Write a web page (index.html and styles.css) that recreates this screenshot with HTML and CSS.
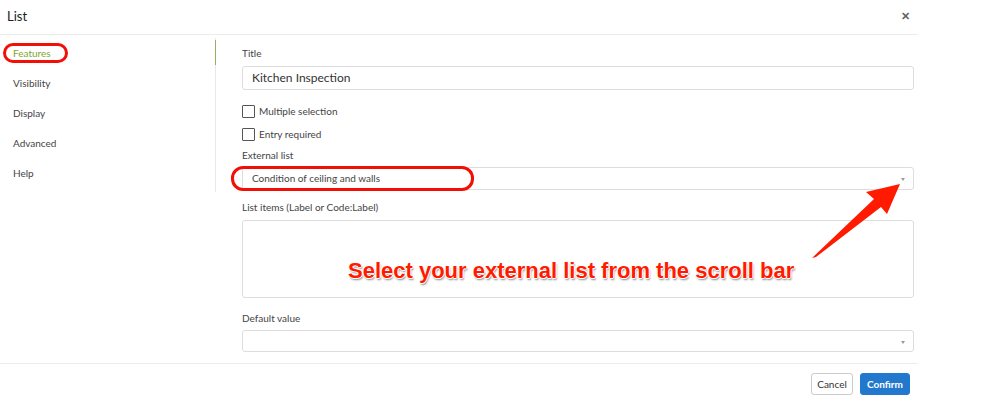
FILE: index.html
```html
<!DOCTYPE html>
<html>
<head>
	<meta charset="utf-8" />
	<title>List</title>
	<link rel="stylesheet" href="styles.css">
</head>
<body>
<div class="modal">
	<div class="modal-header">
		<span class="modal-title">List</span>
		<span class="close">&#x2715;</span>
	</div>
	<div class="modal-body">
		<ul class="tabs">
			<li class="active">Features</li>
			<li>Visibility</li>
			<li>Display</li>
			<li>Advanced</li>
			<li>Help</li>
		</ul>
		<div class="form">
			<label class="field-label">Title</label>
			<div class="input">Kitchen Inspection</div>

			<div class="check"><span class="box"></span>Multiple selection</div>
			<div class="check second"><span class="box"></span>Entry required</div>

			<label class="field-label ext">External list</label>
			<div class="select small-text">Condition of ceiling and walls<span class="caret"></span></div>

			<label class="field-label items">List items (Label or Code:Label)</label>
			<div class="textarea"></div>

			<label class="field-label default">Default value</label>
			<div class="select empty"><span class="caret"></span></div>
		</div>
	</div>
	<div class="modal-footer">
		<button class="btn btn-cancel">Cancel</button>
		<button class="btn btn-primary">Confirm</button>
	</div>

	<!-- annotations drawn over the screenshot -->
	<span class="mark mark-tab"></span>
	<span class="mark mark-select"></span>
	<svg class="arrow" width="1000" height="401" viewBox="0 0 1000 401">
		<polygon points="812,258 816,257 881,207 887,214 900,184 866,192 874,199" fill="#ff1a00" />
	</svg>
	<div class="callout">Select your external list from the scroll bar</div>
</div>
</body>
</html>
```

FILE: styles.css
```css
* {
	margin: 0;
	padding: 0;
	box-sizing: border-box;
}
body {
	font-family: Lato, "Open Sans", sans-serif;
	color: #333;
	background: #fff;
}
ul {
	list-style: none;
}
.modal {
	width: 1000px;
	height: 401px;
	position: relative;
}
.modal-header {
	width: 918px;
	height: 35px;
	border-bottom: 1px solid #ececec;
	display: flex;
	align-items: center;
	justify-content: space-between;
	padding: 0 7px 3px 7px;
}
.modal-title {
	font-size: 13px;
	color: #222;
}
.close {
	font-size: 11px;
	font-weight: bold;
	color: #666;
	margin-right: 1px;
}
.modal-body {
	display: flex;
	width: 918px;
	height: 329px;
	border-bottom: 1px solid #ececec;
}
.tabs {
	width: 216px;
	flex: none;
	margin-top: 3px;
	height: 154px;
	border-right: 1px solid #e8e8e8;
	font-size: 10px;
	color: #444;
}
.tabs li {
	height: 30px;
	line-height: 30px;
	padding-left: 13px;
	position: relative;
}
.tabs li.active {
	color: #7ea62e;
}
.tabs li.active::after {
	content: "";
	position: absolute;
	right: -1px;
	top: 2px;
	width: 1px;
	height: 25px;
	background: #94b25e;
}
.form {
	flex: 1;
	padding: 11px 0 0 26px;
	display: flex;
	flex-direction: column;
}
.field-label {
	font-size: 10px;
	line-height: 14px;
	color: #444;
}
.input, .select, .textarea {
	border: 1px solid #ddd;
	border-radius: 3px;
	background: #fff;
	width: 672px;
}
.input {
	margin-top: 6px;
	height: 24px;
	line-height: 22px;
	padding-left: 9px;
	font-size: 12px;
	color: #333;
}
.check {
	display: flex;
	align-items: center;
	font-size: 10px;
	color: #444;
	height: 14px;
	margin-top: 14px;
}
.check.second {
	margin-top: 9px;
}
.box {
	width: 13px;
	height: 13px;
	border: 1px solid #555;
	border-radius: 1px;
	margin-right: 4px;
}
.ext {
	margin-top: 7px;
}
.select {
	margin-top: 5px;
	height: 23px;
	line-height: 21px;
	padding-left: 9px;
	font-size: 10px;
	color: #444;
	position: relative;
}
.caret {
	position: absolute;
	right: 8px;
	top: 10px;
	border-left: 2px solid transparent;
	border-right: 2px solid transparent;
	border-top: 3px solid #999;
}
.items {
	margin-top: 10px;
}
.textarea {
	margin-top: 6px;
	height: 78px;
}
.default {
	margin-top: 13px;
}
.select.empty {
	height: 22px;
}
.modal-footer {
	width: 918px;
	display: flex;
	justify-content: flex-end;
	padding: 9px 8px 0 0;
	gap: 7px;
}
.btn {
	font-family: Lato, "Open Sans", sans-serif;
	font-size: 10px;
	height: 22px;
	border: 1px solid #ccc;
	border-radius: 3px;
	background: #fff;
	color: #333;
}
.btn-cancel {
	width: 42px;
}
.btn-primary {
	width: 50px;
	background: #2278cd;
	border-color: #2278cd;
	color: #fff;
	font-weight: bold;
}
.mark {
	position: absolute;
	border: 3px solid #f10f06;
	border-radius: 12px;
}
.mark-tab {
	left: 3px;
	top: 43px;
	width: 65px;
	height: 20px;
	border-radius: 10px;
}
.mark-select {
	left: 231px;
	top: 166px;
	width: 243px;
	height: 25px;
}
.arrow {
	position: absolute;
	left: 0;
	top: 0;
}
.callout {
	position: absolute;
	left: 348px;
	top: 258px;
	font-family: "Liberation Sans", Arial, sans-serif;
	font-weight: bold;
	font-size: 22px;
	color: #ff1a00;
	white-space: nowrap;
	text-shadow: 1px 0 0 #fff, -1px 0 0 #fff, 0 1px 0 #fff, 0 -1px 0 #fff, 1px 2px 2px rgba(0,0,0,0.45);
}
```
